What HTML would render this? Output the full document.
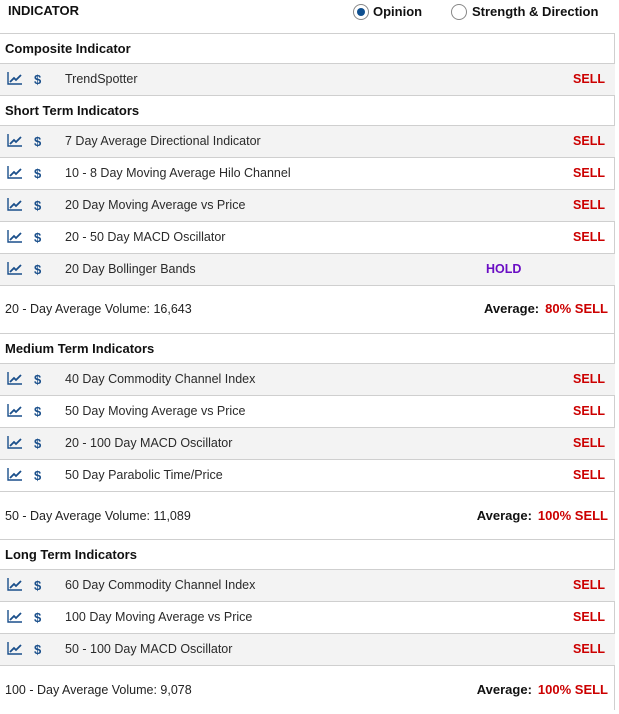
<!DOCTYPE html>
<html><head><meta charset="utf-8"><style>
*{margin:0;padding:0;box-sizing:border-box}
body{width:619px;height:710px;overflow:hidden;background:#fff;font-family:"Liberation Sans",sans-serif;color:#222;position:relative}
.r{position:absolute;left:0;width:615px;border-bottom:1px solid #cfcfcf}
.vb{position:absolute;left:614px;top:33px;width:1px;height:677px;background:#cfcfcf}
.g{background:#f3f3f3}
.h{font-weight:bold;font-size:13px;color:#111;padding-left:5px}
.row{height:32px;font-size:12.5px;line-height:31px}
.row .ic{position:absolute;left:7px;top:8px}
.row .d{position:absolute;left:34px;top:0;color:#1a4f8b;font-weight:bold;font-size:13px}
.row .t{position:absolute;left:65px;top:0;color:#2a2a2a}
.s{position:absolute;right:10px;top:0;color:#c00;font-weight:bold;font-size:12.5px}
.hold{position:absolute;left:486px;top:0;color:#6a0dc4;font-weight:bold;font-size:12.5px}
.av{font-size:12.5px}
.av .l{position:absolute;left:5px;top:0}
.av .a{position:absolute;right:7px;top:0;font-weight:bold;font-size:13px;color:#111}
.av .a b{color:#c00;margin-left:6px}
</style></head><body>
<div class="vb"></div>
<div class="r" style="top:0;height:34px;border-bottom:1px solid #cfcfcf">
 <div style="position:absolute;left:8px;top:3px;font-weight:bold;font-size:13px;color:#111">INDICATOR</div>
 <div style="position:absolute;left:353px;top:4px;width:16px;height:16px;border:1px solid #888;border-radius:50%"><div style="position:absolute;left:3px;top:3px;width:8px;height:8px;border-radius:50%;background:#0f4f8f"></div></div>
 <div style="position:absolute;left:373px;top:4px;font-weight:bold;font-size:13px;color:#111">Opinion</div>
 <div style="position:absolute;left:451px;top:4px;width:16px;height:16px;border:1px solid #888;border-radius:50%"></div>
 <div style="position:absolute;left:472px;top:4px;font-weight:bold;font-size:13px;color:#111">Strength &amp; Direction</div>
</div>
<svg width="0" height="0" style="position:absolute"><defs><symbol id="c" viewBox="0 0 16 13"><path d="M1 0V12H15" fill="none" stroke="#1a4f8b" stroke-width="1.4"/><path d="M3 10L7 6L9 8L14 3" fill="none" stroke="#1a4f8b" stroke-width="1.8"/></symbol></defs></svg>

<div class="r h" style="top:34px;height:30px;line-height:29px">Composite Indicator</div>
<div class="r row g" style="top:64px"><svg class="ic" width="16" height="13"><use href="#c"/></svg><span class="d">$</span><span class="t">TrendSpotter</span><span class="s">SELL</span></div>
<div class="r h" style="top:96px;height:30px;line-height:29px">Short Term Indicators</div>
<div class="r row g" style="top:126px"><svg class="ic" width="16" height="13"><use href="#c"/></svg><span class="d">$</span><span class="t">7 Day Average Directional Indicator</span><span class="s">SELL</span></div>
<div class="r row" style="top:158px"><svg class="ic" width="16" height="13"><use href="#c"/></svg><span class="d">$</span><span class="t">10 - 8 Day Moving Average Hilo Channel</span><span class="s">SELL</span></div>
<div class="r row g" style="top:190px"><svg class="ic" width="16" height="13"><use href="#c"/></svg><span class="d">$</span><span class="t">20 Day Moving Average vs Price</span><span class="s">SELL</span></div>
<div class="r row" style="top:222px"><svg class="ic" width="16" height="13"><use href="#c"/></svg><span class="d">$</span><span class="t">20 - 50 Day MACD Oscillator</span><span class="s">SELL</span></div>
<div class="r row g" style="top:254px"><svg class="ic" width="16" height="13"><use href="#c"/></svg><span class="d">$</span><span class="t">20 Day Bollinger Bands</span><span class="hold">HOLD</span></div>
<div class="r av" style="top:286px;height:48px;line-height:46px"><span class="l">20 - Day Average Volume: 16,643</span><span class="a">Average:<b>80% SELL</b></span></div>
<div class="r h" style="top:334px;height:30px;line-height:29px">Medium Term Indicators</div>
<div class="r row g" style="top:364px"><svg class="ic" width="16" height="13"><use href="#c"/></svg><span class="d">$</span><span class="t">40 Day Commodity Channel Index</span><span class="s">SELL</span></div>
<div class="r row" style="top:396px"><svg class="ic" width="16" height="13"><use href="#c"/></svg><span class="d">$</span><span class="t">50 Day Moving Average vs Price</span><span class="s">SELL</span></div>
<div class="r row g" style="top:428px"><svg class="ic" width="16" height="13"><use href="#c"/></svg><span class="d">$</span><span class="t">20 - 100 Day MACD Oscillator</span><span class="s">SELL</span></div>
<div class="r row" style="top:460px"><svg class="ic" width="16" height="13"><use href="#c"/></svg><span class="d">$</span><span class="t">50 Day Parabolic Time/Price</span><span class="s">SELL</span></div>
<div class="r av" style="top:492px;height:48px;line-height:48px"><span class="l">50 - Day Average Volume: 11,089</span><span class="a">Average:<b>100% SELL</b></span></div>
<div class="r h" style="top:540px;height:30px;line-height:29px">Long Term Indicators</div>
<div class="r row g" style="top:570px"><svg class="ic" width="16" height="13"><use href="#c"/></svg><span class="d">$</span><span class="t">60 Day Commodity Channel Index</span><span class="s">SELL</span></div>
<div class="r row" style="top:602px"><svg class="ic" width="16" height="13"><use href="#c"/></svg><span class="d">$</span><span class="t">100 Day Moving Average vs Price</span><span class="s">SELL</span></div>
<div class="r row g" style="top:634px"><svg class="ic" width="16" height="13"><use href="#c"/></svg><span class="d">$</span><span class="t">50 - 100 Day MACD Oscillator</span><span class="s">SELL</span></div>
<div class="r av" style="top:666px;height:48px;line-height:48px;border-bottom:none"><span class="l">100 - Day Average Volume: 9,078</span><span class="a">Average:<b>100% SELL</b></span></div>
</body></html>
